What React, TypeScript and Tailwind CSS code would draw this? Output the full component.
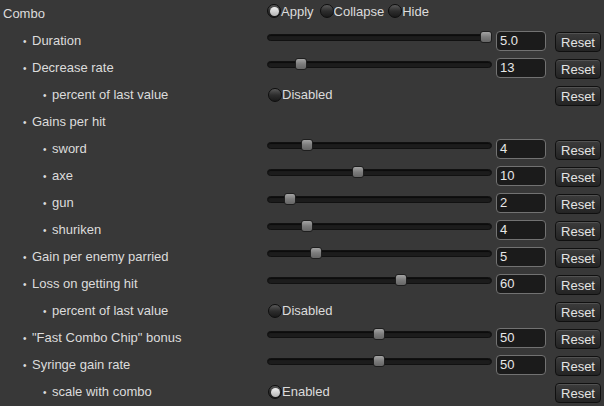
const font = { fontFamily: '"Liberation Sans", Arial, sans-serif' };

type Row =
  | { kind: 'header'; label: string }
  | { kind: 'slider'; label: string; level: number; value: string; thumb: number }
  | { kind: 'toggle'; label: string; level: number; on: boolean }
  | { kind: 'group'; label: string; level: number };

const rows: Row[] = [
  { kind: 'header', label: 'Combo' },
  { kind: 'slider', label: 'Duration', level: 1, value: '5.0', thumb: 486 },
  { kind: 'slider', label: 'Decrease rate', level: 1, value: '13', thumb: 301 },
  { kind: 'toggle', label: 'percent of last value', level: 2, on: false },
  { kind: 'group', label: 'Gains per hit', level: 1 },
  { kind: 'slider', label: 'sword', level: 2, value: '4', thumb: 307 },
  { kind: 'slider', label: 'axe', level: 2, value: '10', thumb: 358 },
  { kind: 'slider', label: 'gun', level: 2, value: '2', thumb: 290 },
  { kind: 'slider', label: 'shuriken', level: 2, value: '4', thumb: 307 },
  { kind: 'slider', label: 'Gain per enemy parried', level: 1, value: '5', thumb: 316 },
  { kind: 'slider', label: 'Loss on getting hit', level: 1, value: '60', thumb: 401 },
  { kind: 'toggle', label: 'percent of last value', level: 2, on: false },
  { kind: 'slider', label: '"Fast Combo Chip" bonus', level: 1, value: '50', thumb: 379 },
  { kind: 'slider', label: 'Syringe gain rate', level: 1, value: '50', thumb: 379 },
  { kind: 'toggle', label: 'scale with combo', level: 2, on: true },
];

function Radio({ on }: { on: boolean }) {
  return (
    <span className="w-[14px] h-[14px] rounded-full border border-[#0e0e0e] bg-gradient-to-b from-[#5a5a5a] via-[#2e2e2e] to-[#1a1a1a] flex items-center justify-center shrink-0">
      {on && <span className="w-[9px] h-[9px] rounded-full bg-gradient-to-b from-[#f2f2f2] to-[#b4b4b4]" />}
    </span>
  );
}

function Reset() {
  return (
    <button className="w-[46px] h-[20px] mt-[3px] rounded-[4px] border border-[#101010] bg-gradient-to-b from-[#3c3c3c] to-[#242424] text-[13px] text-[#e4e4e4] leading-none shadow-[inset_0_1px_0_rgba(255,255,255,0.12)]">
      Reset
    </button>
  );
}

function Label({ text, level }: { text: string; level: number }) {
  const pad = level === 0 ? 'pl-[3px]' : level === 1 ? 'pl-[23px]' : 'pl-[43px]';
  return (
    <div className={`w-[267px] h-[24px] flex items-center ${pad} shrink-0`}>
      {level > 0 && <span className="w-[9px] text-[10px]">•</span>}
      <span>{text}</span>
    </div>
  );
}

export default function App() {
  return (
    <div style={font} className="w-[604px] h-[406px] bg-[#383838] text-[13px] text-[#dcdcdc] pt-[2px] overflow-hidden">
      {rows.map((r, i) => {
        if (r.kind === 'header') {
          return (
            <div key={i} className="h-[27px] flex items-start">
              <Label text={r.label} level={0} />
              <div className="flex items-center mt-[2px] h-[14px] leading-[13px]">
                <div className="flex items-center"><Radio on /><span>Apply</span></div>
                <div className="flex items-center ml-[6px]"><Radio on={false} /><span>Collapse</span></div>
                <div className="flex items-center ml-[4px]"><Radio on={false} /><span>Hide</span></div>
              </div>
            </div>
          );
        }
        if (r.kind === 'group') {
          return (
            <div key={i} className="h-[27px] flex items-start">
              <Label text={r.label} level={r.level} />
            </div>
          );
        }
        if (r.kind === 'toggle') {
          return (
            <div key={i} className="h-[27px] flex items-start">
              <Label text={r.label} level={r.level} />
              <div className="w-[288px] h-[24px] flex items-center pl-[1px]">
                <Radio on={r.on} />
                <span>{r.on ? 'Enabled' : 'Disabled'}</span>
              </div>
              <Reset />
            </div>
          );
        }
        return (
          <div key={i} className="h-[27px] flex items-start">
            <Label text={r.label} level={r.level} />
            <div className="relative w-[225px] h-[12px] mt-[2px] flex items-center shrink-0">
              <div className="w-full h-[7px] rounded-full bg-[#1c1c1c] border border-[#111] shadow-[inset_0_1px_1px_rgba(0,0,0,0.6)]" />
              <div
                className="absolute top-0 w-[12px] h-[12px] rounded-[3px] border border-[#1e1e1e] bg-gradient-to-b from-[#a4a4a4] via-[#7c7c7c] to-[#666]"
                style={{ left: r.thumb - 267 - 6 }}
              />
            </div>
            <div className="w-[50px] h-[20px] mt-[2px] ml-[4px] rounded-[4px] border border-[#727272] bg-[#1b1b1b] text-[#e8e8e8] pl-[3px] flex items-center shrink-0">
              {r.value}
            </div>
            <div className="ml-[9px]">
              <Reset />
            </div>
          </div>
        );
      })}
    </div>
  );
}
